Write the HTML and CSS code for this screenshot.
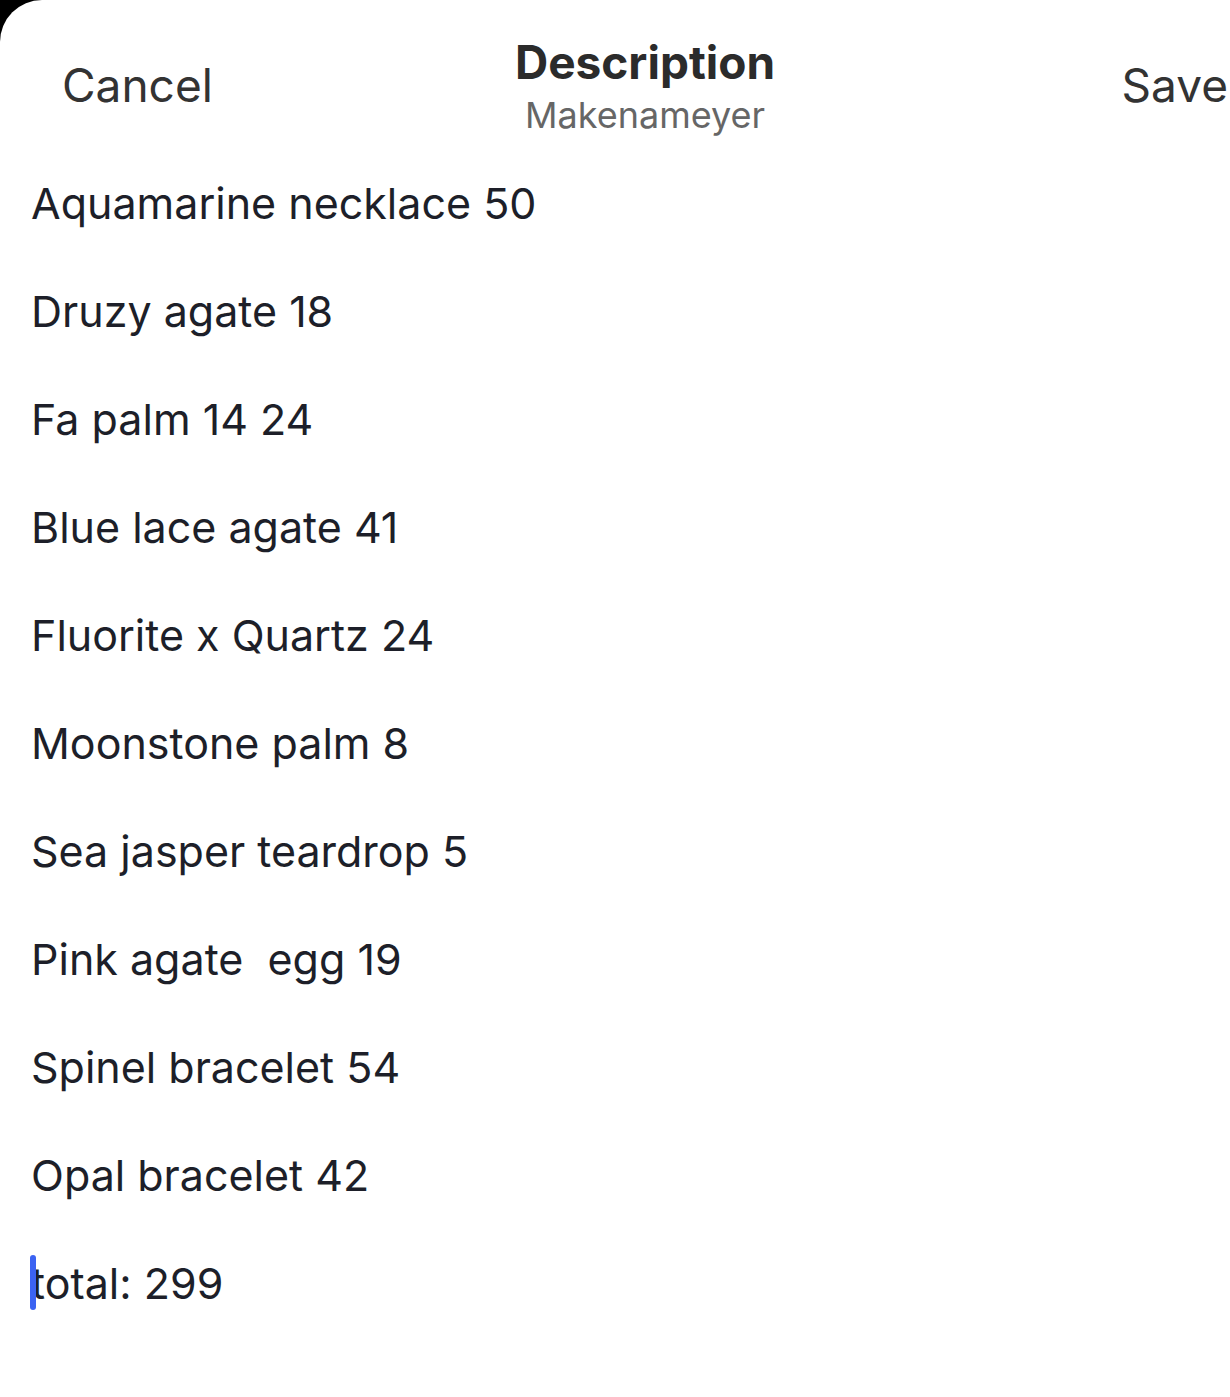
FILE: index.html
```html
<!DOCTYPE html>
<html lang="en">
<head>
    <meta charset="UTF-8">
    <meta name="viewport" content="width=device-width, initial-scale=1.0">
    <title>Description</title>
    <link rel="stylesheet" href="styles.css">
</head>
<body>
    <div class="sheet">
        <div class="nav-bar">
            <div class="nav-button nav-left">Cancel</div>
            <div class="nav-title">
                <div class="title">Description</div>
                <div class="subtitle">Makenameyer</div>
            </div>
            <div class="nav-button nav-right">Save</div>
        </div>
        <div class="note">
            <div class="line">Aquamarine necklace 50</div>
            <div class="line">Druzy agate 18</div>
            <div class="line">Fa palm 14 24</div>
            <div class="line">Blue lace agate 41</div>
            <div class="line">Fluorite x Quartz 24</div>
            <div class="line">Moonstone palm 8</div>
            <div class="line">Sea jasper teardrop 5</div>
            <div class="line">Pink agate&nbsp; egg 19</div>
            <div class="line">Spinel bracelet 54</div>
            <div class="line">Opal bracelet 42</div>
            <div class="line"><span class="caret"></span>total: 299</div>
        </div>
    </div>
</body>
</html>
```

FILE: styles.css
```css
html, body {
    margin: 0;
    height: 100%;
}
body {
    background-color: #000;
    overflow: hidden;
    font-family: 'Inter', 'Liberation Sans', sans-serif;
}
.sheet {
    width: 1290px;
    min-height: 100vh;
    background-color: #fff;
    border-top-left-radius: 42px;
}
.nav-bar {
    display: grid;
    grid-template-columns: 1fr auto 1fr;
    align-items: start;
    height: 149px;
    padding: 0 62px;
    box-sizing: border-box;
}
.nav-button {
    font-size: 46px;
    line-height: 54px;
    color: #333;
    margin-top: 58px;
}
.nav-left {
    justify-self: start;
}
.nav-right {
    justify-self: end;
}
.nav-title {
    text-align: center;
    margin-top: 35px;
}
.title {
    font-size: 46px;
    font-weight: 700;
    color: #2b2b2b;
    line-height: 54px;
}
.subtitle {
    font-size: 36px;
    color: #666;
    line-height: 52px;
}
.note {
    padding-left: 31px;
    color: #1d1f29;
}
.line {
    position: relative;
    font-size: 43px;
    line-height: 108px;
}
.caret {
    position: absolute;
    left: -1px;
    top: 26px;
    width: 6px;
    height: 55px;
    border-radius: 3px;
    background-color: #3b63f2;
}
```
